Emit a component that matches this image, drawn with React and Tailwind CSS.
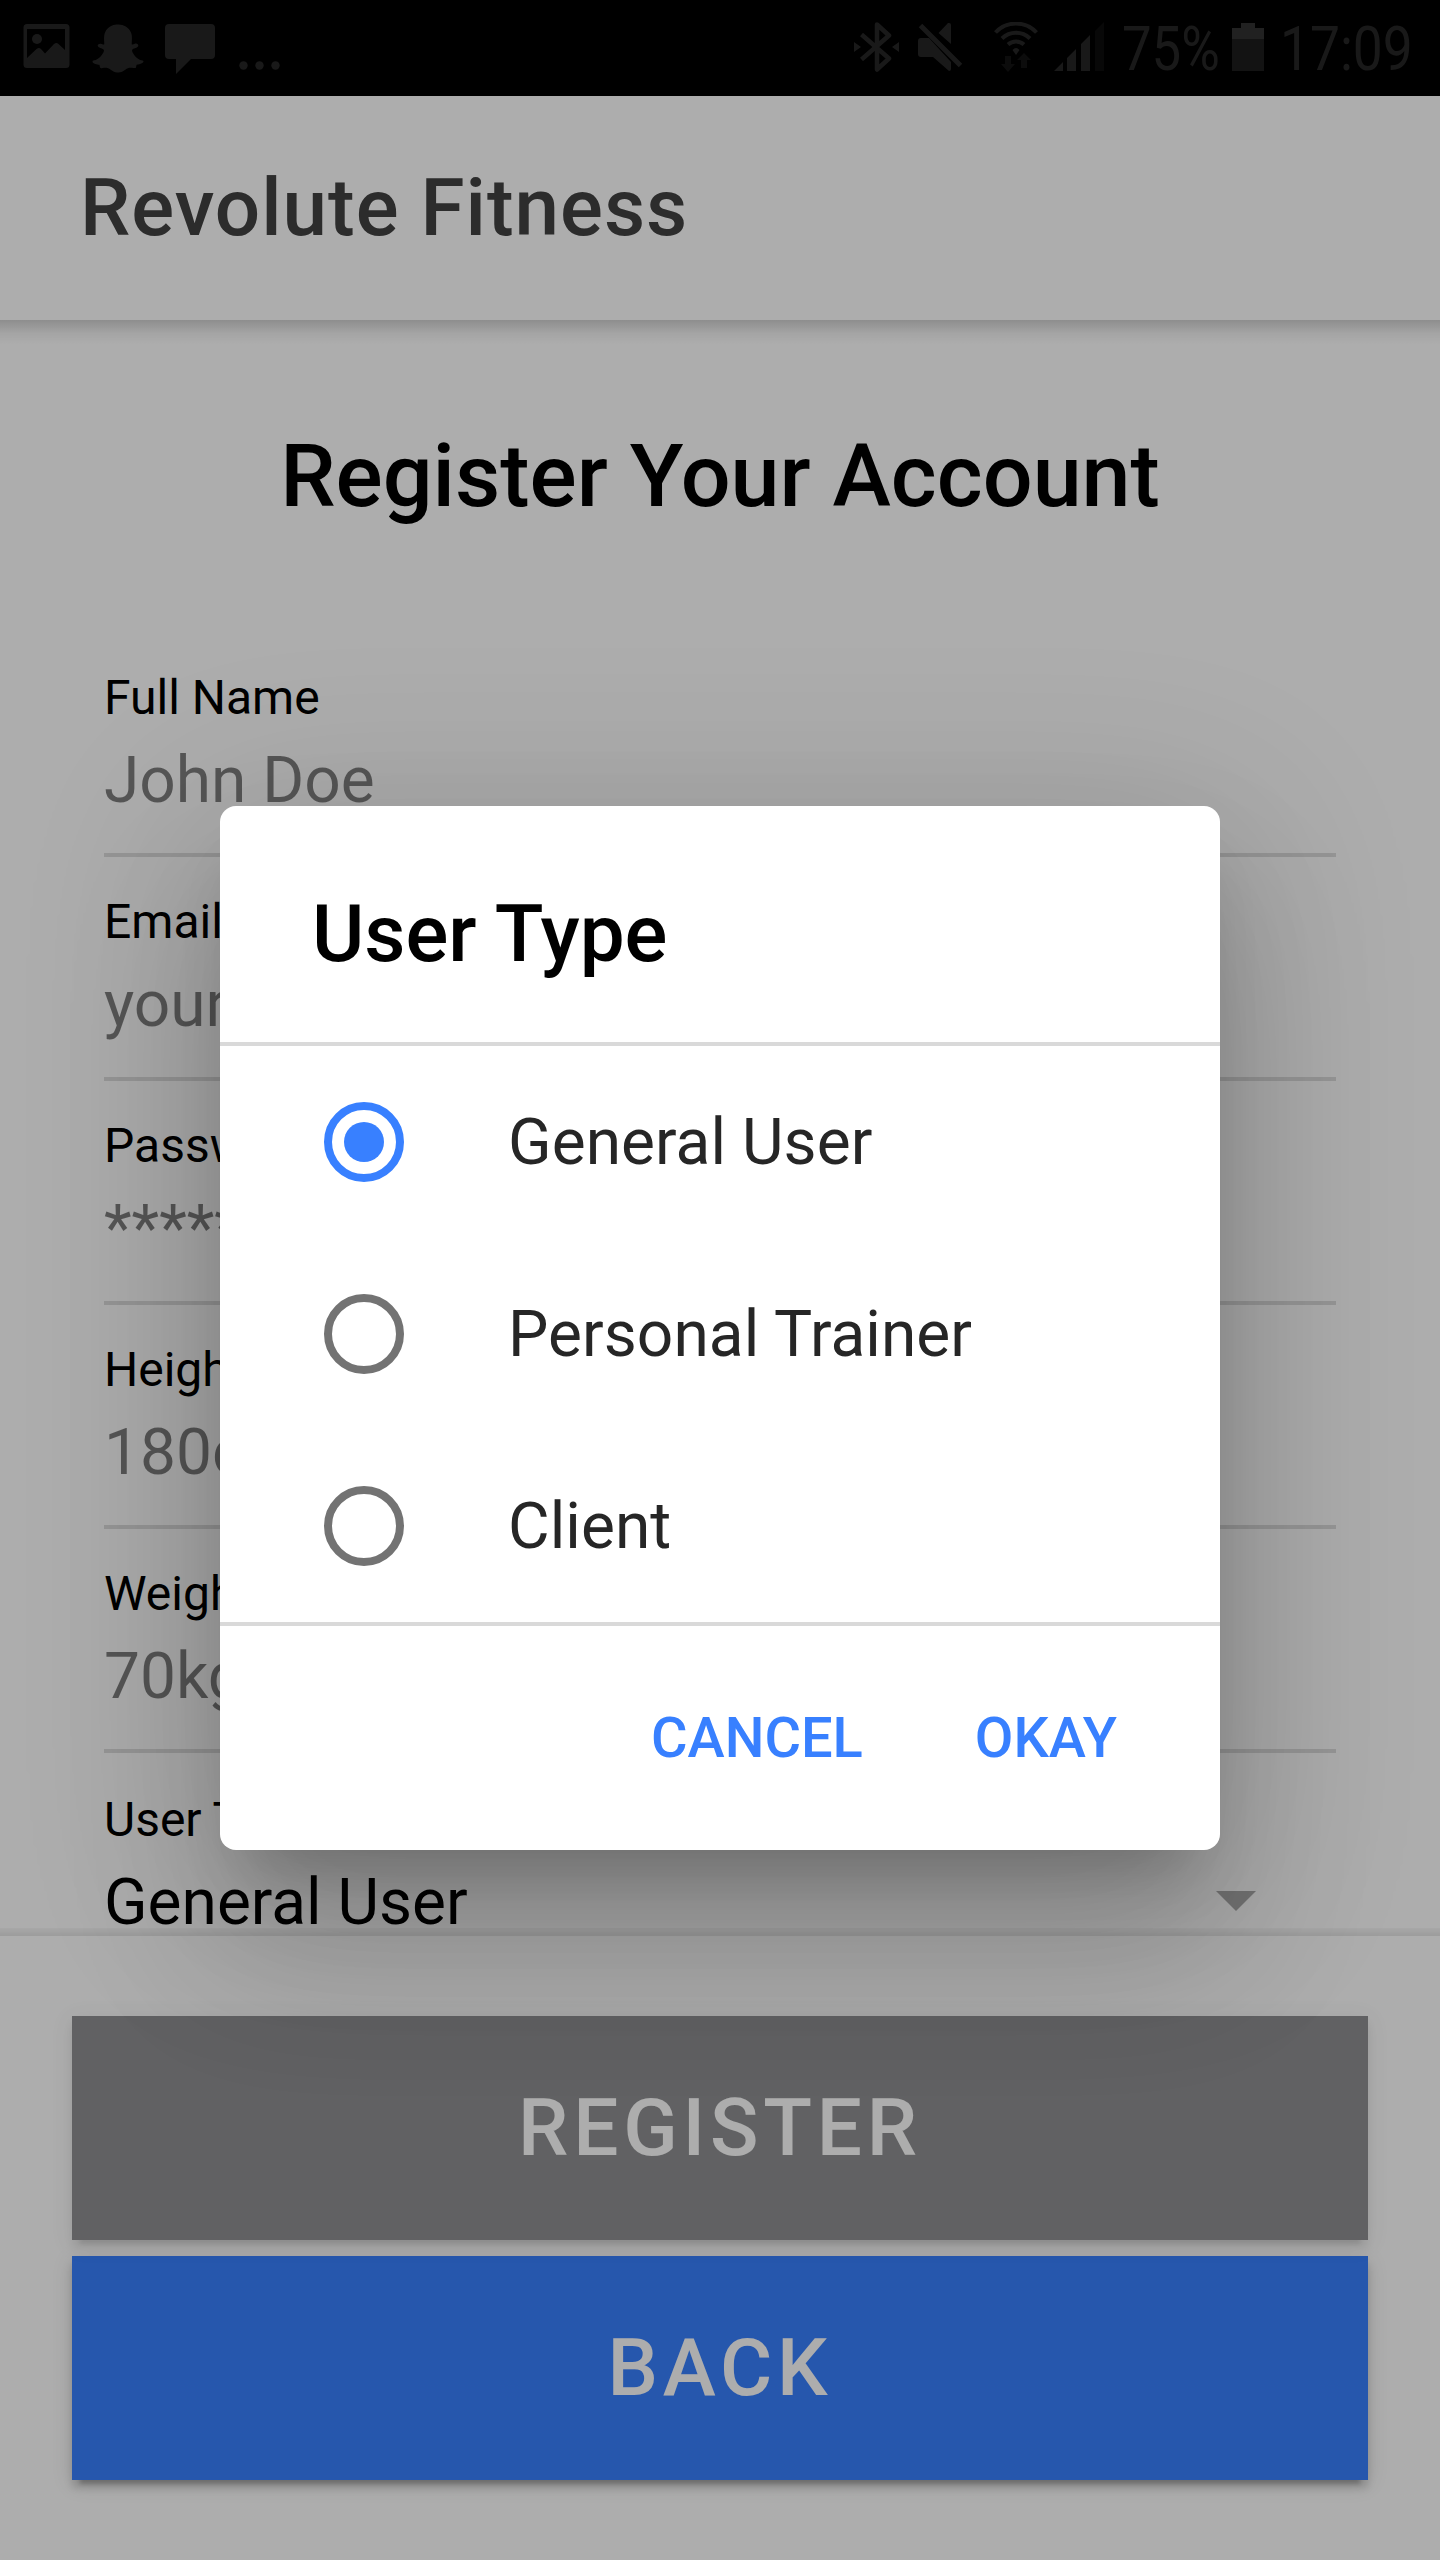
import React from 'react';
import { FaSnapchatGhost } from 'react-icons/fa';

const fields = [
  { label: 'Full Name', value: 'John Doe' },
  { label: 'Email', value: 'your@email.com' },
  { label: 'Password', value: '********' },
  { label: 'Height', value: '180cm' },
  { label: 'Weight', value: '70kg' },
];

const options = ['General User', 'Personal Trainer', 'Client'];

function StatusBar() {
  return (
    <div className="flex h-[96px] shrink-0 items-start justify-between bg-black text-[#262626]">
      <div className="flex items-start pl-[23px] pt-[23px]">
        <svg className="h-[46px] w-[47px]" viewBox="0 0 47 46" fill="currentColor">
          <path fillRule="evenodd" d="M4 1h39a3.500 3.500 0 0 1 3.500 3.500v37a3.500 3.500 0 0 1-3.500 3.500H4A3.500 3.500 0 0 1 .5 41.500v-37A3.500 3.500 0 0 1 4 1Zm0 5v29L13.500 26q2.500-2 4.500 0l4 4.500L31 21q2.500-2 4.500 0l6.500 6V6Z" />
          <circle cx="14" cy="16" r="5" />
        </svg>
        <FaSnapchatGhost className="ml-[21px] h-[51px] w-[54px]" />
        <svg className="ml-[20px] mt-px h-[50px] w-[50px]" viewBox="0 0 50 50" fill="currentColor">
          <path d="M4 0h42a4 4 0 0 1 4 4v27a4 4 0 0 1-4 4H26L11 50V35H4a4 4 0 0 1-4-4V4a4 4 0 0 1 4-4Z" />
        </svg>
        <svg className="ml-[24px] mt-[38px] h-[9px] w-[41px]" viewBox="0 0 41 9" fill="currentColor">
          <circle cx="4.500" cy="4.500" r="4.200" />
          <circle cx="20.500" cy="4.500" r="4.200" />
          <circle cx="36.500" cy="4.500" r="4.200" />
        </svg>
      </div>
      <div className="flex items-start pr-[28px] pt-[22px]">
        <svg className="h-[50px] w-[46px]" viewBox="0 0 46 50" fill="none" stroke="currentColor" strokeWidth="4.500" strokeLinejoin="round">
          <path d="M7.500 12.500 35 36.500 23 47.500V2.500l12 11L7.500 37.500" />
          <path d="M0 20v10l7-5ZM45 20v10l-7-5Z" fill="currentColor" stroke="none" />
        </svg>
        <svg className="ml-[18px] h-[50px] w-[46px]" viewBox="0 0 46 50" fill="currentColor">
          <path d="M3 16h8l22 24v7q0 2-2 2L15 35H3a3 3 0 0 1-3-3V19a3 3 0 0 1 3-3ZM30 1h1q2 0 2 2v19L20.500 11Z" />
          <path d="M2.500 3.500 42.500 43.500" stroke="currentColor" strokeWidth="5" />
        </svg>
        <svg className="ml-[30px] h-[50px] w-[44px]" viewBox="0 0 44 50" fill="none" stroke="currentColor" strokeWidth="4">
          <path d="M1.500 10.500a28 28 0 0 1 41 0M8 16.500a20 20 0 0 1 28 0M14 22.500a12 12 0 0 1 16 0" />
          <path d="M18.500 28q3.500-4 7 0L22 33Z" fill="currentColor" stroke="none" />
          <path d="M11 34h6v8h4l-7 8-7-8h4ZM27 46h6v-8h4l-7-7-7 7h4Z" fill="#131313" stroke="none" />
        </svg>
        <svg className="ml-[16px] h-[50px] w-[50px]" viewBox="0 0 50 50" fill="currentColor">
          <path d="M9 40v9H0ZM22 27v22h-9V36ZM36 13v36h-9V22Z" />
          <path d="M50 0v49h-9V9Z" fill="#0d0d0d" />
        </svg>
        <span className="ml-[18px] mt-[-3px] inline-block w-[100px] origin-left scale-x-[0.850] whitespace-nowrap text-[62px] leading-[60px]">75%</span>
        <svg className="ml-[10px] h-[50px] w-[32px]" viewBox="0 0 32 50">
          <path d="M9 1h14v5h9v11H0V6h9Z" fill="#323232" />
          <path d="M0 17h32v32H0Z" fill="#1d1d1d" />
        </svg>
        <span className="ml-[16px] mt-[-3px] inline-block w-[132px] origin-left scale-x-[0.860] whitespace-nowrap text-[62px] leading-[60px]">17:09</span>
      </div>
    </div>
  );
}

function Field({ label, value }) {
  return (
    <div className="flex h-[224px] flex-col border-b-4 border-black/[0.130]">
      <span className="mt-[37px] text-[48px] leading-[56px]">{label}</span>
      <span className="mt-[17px] text-[64px] leading-[76px] text-black/50">{value}</span>
    </div>
  );
}

function Option({ label, checked }) {
  return (
    <div className="flex h-[192px] items-center pl-[104px]">
      <span
        className={
          checked
            ? 'flex h-[80px] w-[80px] items-center justify-center rounded-full border-8 border-[#3880ff]'
            : 'flex h-[80px] w-[80px] rounded-full border-8 border-[#737373]'
        }
      >
        {checked && <span className="h-[40px] w-[40px] rounded-full bg-[#3880ff]" />}
      </span>
      <span className="ml-[104px] pt-[2px] text-[64px] leading-[76px] tracking-[0.060px] text-[#262626]">{label}</span>
    </div>
  );
}

const buttonShadow =
  'shadow-[0_12px_4px_-8px_rgba(0,0,0,0.2),0_8px_8px_0_rgba(0,0,0,0.14),0_4px_20px_0_rgba(0,0,0,0.12)]';

export default function App() {
  return (
    <div className="relative flex h-[2560px] w-[1440px] flex-col overflow-hidden bg-white font-['Roboto',sans-serif] text-black">
      <StatusBar />
      <header className="flex h-[224px] shrink-0 items-center pl-[80px]">
        <h1 className="text-[80px] font-medium leading-[96px] tracking-[1px] text-[#424242]">Revolute Fitness</h1>
      </header>
      <main className="flex h-[1616px] shrink-0 flex-col">
        <div className="h-[24px] shrink-0 bg-linear-to-b from-black/[0.180] via-black/[0.050] via-55% to-transparent" />
        <h2 className="mt-[79px] shrink-0 text-center text-[88px] font-medium leading-[106px]">Register Your Account</h2>
        <div className="mx-[104px] mt-[104px] shrink-0">
          {fields.map((f) => (
            <Field key={f.label} label={f.label} value={f.value} />
          ))}
          <div className="flex h-[175px] flex-col">
            <span className="mt-[39px] text-[48px] leading-[56px]">User Type</span>
            <div className="mt-[30px] flex items-center justify-between pr-[80px]">
              <span className="text-[64px] leading-[50px]">General User</span>
              <svg className="mb-[4px] h-[20px] w-[40px]" viewBox="0 0 40 20">
                <path d="M0 0h40L20 20Z" fillOpacity="0.330" />
              </svg>
            </div>
          </div>
        </div>
        <div className="h-[8px] shrink-0 bg-linear-to-b from-black/[0.030] to-black/[0.100]" />
      </main>
      <footer className="flex grow flex-col gap-[16px] bg-white px-[72px] pt-[80px]">
        <button className={`h-[224px] bg-[#222428] text-[80px] font-medium leading-[96px] tracking-[4.8px] text-white opacity-50 ${buttonShadow}`}>
          REGISTER
        </button>
        <button className={`h-[224px] bg-[#3880ff] text-[80px] font-medium leading-[96px] tracking-[4.8px] text-white ${buttonShadow}`}>
          BACK
        </button>
      </footer>

      <div className="absolute inset-0 flex items-start justify-center bg-black/[0.320] pt-[806px]">
        <div className="flex h-[1044px] w-[1000px] flex-col rounded-[16px] bg-white shadow-[0_44px_60px_-28px_rgba(0,0,0,0.2),0_96px_152px_12px_rgba(0,0,0,0.14),0_36px_184px_32px_rgba(0,0,0,0.12)]">
          <h2 className="h-[236px] pl-[92px] pt-[80px] text-[80px] font-medium leading-[96px]">User Type</h2>
          <div className="border-y-4 border-[#d9d9d9]">
            {options.map((o, i) => (
              <Option key={o} label={o} checked={i === 0} />
            ))}
          </div>
          <div className="flex grow items-center justify-end gap-[112px] pr-[103px] text-[56px] font-medium leading-[66px] text-[#3880ff]">
            <button>CANCEL</button>
            <button>OKAY</button>
          </div>
        </div>
      </div>
    </div>
  );
}
